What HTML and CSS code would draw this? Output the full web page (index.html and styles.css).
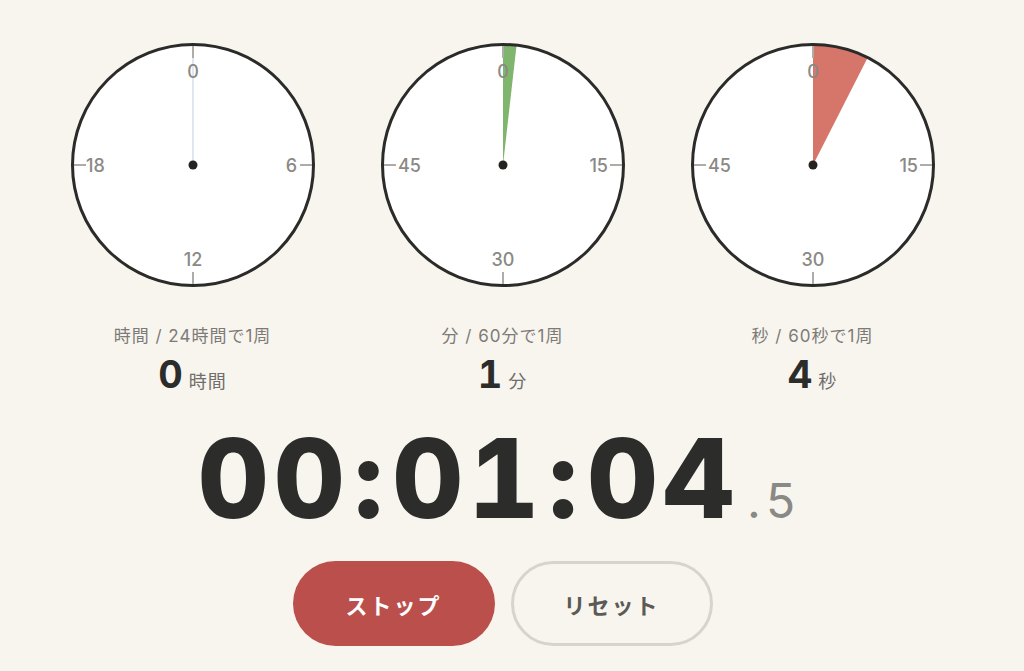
FILE: index.html
```html
<!DOCTYPE html>
<html lang="ja">
<head>
<meta charset="utf-8">
<title>ストップウォッチ</title>
<link rel="stylesheet" href="styles.css">
</head>
<body>
<main class="app">
  <section class="dials">
    <div class="dial">
      <svg class="face" width="250" height="250" viewBox="0 0 250 250">
        <circle cx="125" cy="125" r="120" class="face-bg"/>
        <line x1="125" y1="125" x2="125" y2="6" class="hand-hour"/>
        <line x1="125" y1="6" x2="125" y2="18" class="tick"/>
        <line x1="125" y1="232" x2="125" y2="244" class="tick"/>
        <line x1="6" y1="125" x2="18" y2="125" class="tick"/>
        <line x1="232" y1="125" x2="244" y2="125" class="tick"/>
        <text x="125" y="31" class="num mid">0</text>
        <text x="229" y="125" class="num end">6</text>
        <text x="125" y="219" class="num mid">12</text>
        <text x="18" y="125" class="num start">18</text>
        <circle cx="125" cy="125" r="120.5" class="rim"/>
        <circle cx="125" cy="125" r="4.5" class="pin"/>
      </svg>
      <div class="caption">時間 / 24時間で1周</div>
      <div class="value"><span class="big">0</span><span class="unit">時間</span></div>
    </div>
    <div class="dial">
      <svg class="face" width="250" height="250" viewBox="0 0 250 250">
        <circle cx="125" cy="125" r="120" class="face-bg"/>
        <path d="M125 125 L125 5 A120 120 0 0 1 138.48 5.76 Z" class="wedge-min"/>
        <line x1="125" y1="6" x2="125" y2="18" class="tick"/>
        <line x1="125" y1="232" x2="125" y2="244" class="tick"/>
        <line x1="6" y1="125" x2="18" y2="125" class="tick"/>
        <line x1="232" y1="125" x2="244" y2="125" class="tick"/>
        <text x="125" y="31" class="num mid">0</text>
        <text x="230" y="125" class="num end">15</text>
        <text x="125" y="219" class="num mid">30</text>
        <text x="20" y="125" class="num start">45</text>
        <circle cx="125" cy="125" r="120.5" class="rim"/>
        <circle cx="125" cy="125" r="4.5" class="pin"/>
      </svg>
      <div class="caption">分 / 60分で1周</div>
      <div class="value"><span class="big">1</span><span class="unit">分</span></div>
    </div>
    <div class="dial">
      <svg class="face" width="250" height="250" viewBox="0 0 250 250">
        <circle cx="125" cy="125" r="120" class="face-bg"/>
        <path d="M125 125 L125 5 A120 120 0 0 1 179.48 18.08 Z" class="wedge-sec"/>
        <line x1="125" y1="6" x2="125" y2="18" class="tick"/>
        <line x1="125" y1="232" x2="125" y2="244" class="tick"/>
        <line x1="6" y1="125" x2="18" y2="125" class="tick"/>
        <line x1="232" y1="125" x2="244" y2="125" class="tick"/>
        <text x="125" y="31" class="num mid">0</text>
        <text x="230" y="125" class="num end">15</text>
        <text x="125" y="219" class="num mid">30</text>
        <text x="20" y="125" class="num start">45</text>
        <circle cx="125" cy="125" r="120.5" class="rim"/>
        <circle cx="125" cy="125" r="4.5" class="pin"/>
      </svg>
      <div class="caption">秒 / 60秒で1周</div>
      <div class="value"><span class="big">4</span><span class="unit">秒</span></div>
    </div>
  </section>

  <div class="clock"><span class="hms">00<span class="sep">:</span>01<span class="sep">:</span>04</span><span class="tenth">.5</span></div>

  <div class="actions">
    <button class="btn btn-stop" type="button">ストップ</button>
    <button class="btn btn-reset" type="button">リセット</button>
  </div>
</main>
</body>
</html>
```

FILE: styles.css
```css
html, body {
  margin: 0;
  padding: 0;
  background: #f8f5ef;
}

body {
  font-family: Inter, "Noto Sans CJK JP", sans-serif;
  color: #2c2c2a;
  height: 671px;
  overflow: hidden;
}

.app {
  display: flex;
  flex-direction: column;
  align-items: center;
  padding: 40px 19px 0 0;
}

.dials {
  display: flex;
  gap: 60px;
}

.dial {
  width: 250px;
  display: flex;
  flex-direction: column;
  align-items: center;
}

.face {
  display: block;
}

.face-bg {
  fill: #ffffff;
}

.rim {
  fill: none;
  stroke: #2b2b29;
  stroke-width: 3;
}

.pin {
  fill: #232321;
}

.tick {
  stroke: #aeaca7;
  stroke-width: 2;
}

.hand-hour {
  stroke: #c9d6ea;
  stroke-width: 1.2;
}

.wedge-min {
  fill: #7fb56c;
}

.wedge-sec {
  fill: #d6766a;
}

.num {
  font-family: Inter, "Noto Sans CJK JP", sans-serif;
  font-size: 18px;
  font-weight: 500;
  fill: #8b8985;
  dominant-baseline: central;
}

.num.mid { text-anchor: middle; }
.num.start { text-anchor: start; }
.num.end { text-anchor: end; }

.caption {
  margin-top: 34px;
  font-size: 17px;
  letter-spacing: 1px;
  line-height: 24px;
  color: #7d7b77;
}

.value {
  margin-top: 4px;
  display: flex;
  align-items: baseline;
  line-height: 44px;
}

.big {
  font-size: 38px;
  font-weight: 700;
  font-variant-numeric: tabular-nums;
  color: #2c2c2a;
}

.unit {
  margin-left: 6px;
  font-size: 18px;
  letter-spacing: 1px;
  color: #6f6e6a;
}

.clock {
  margin-top: 19px;
  margin-right: 6px;
  display: flex;
  align-items: baseline;
  line-height: 1;
}

.hms {
  font-size: 110px;
  font-weight: 800;
  font-variant-numeric: tabular-nums;
  letter-spacing: 5px;
  color: #2c2c2a;
}

.sep {
  margin: 0 4px;
}

.tenth {
  margin-left: 8px;
  font-size: 48px;
  font-weight: 400;
  letter-spacing: 6px;
  color: #8b8985;
}

.actions {
  margin-top: 28px;
  display: flex;
  gap: 16px;
}

.btn {
  width: 202px;
  height: 85px;
  border-radius: 43px;
  font-family: "Noto Sans CJK JP", sans-serif;
  font-size: 22px;
  font-weight: 700;
  letter-spacing: 2px;
  cursor: pointer;
}

.btn-stop {
  background: #bb4f4c;
  color: #ffffff;
  border: none;
}

.btn-reset {
  background: transparent;
  color: #5b5a56;
  border: 3px solid #d7d4cd;
}
```
